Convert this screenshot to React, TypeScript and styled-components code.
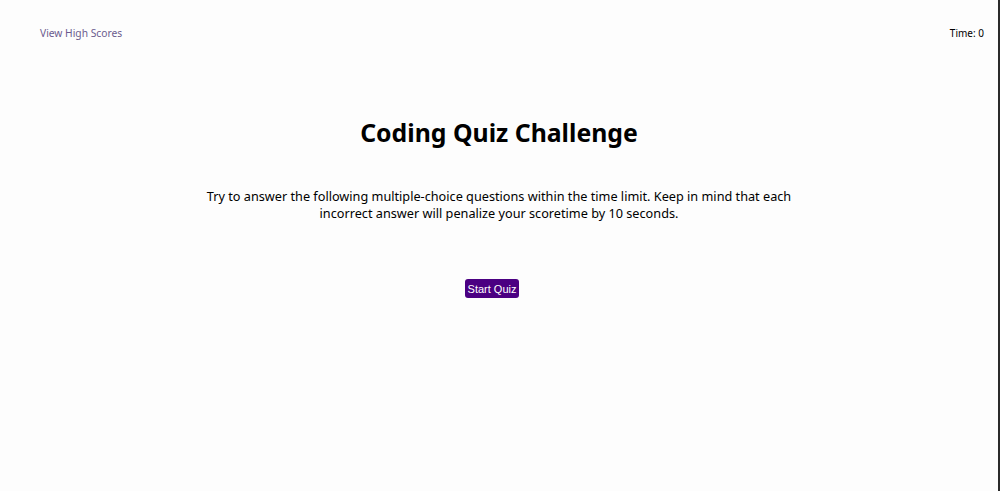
import React from "react";
import styled, { createGlobalStyle } from "styled-components";

const Global = createGlobalStyle`
  html, body { margin: 0; padding: 0; background: #fdfdfd; }
  body { font-family: "Noto Sans", "Open Sans", sans-serif; color: #000; }
`;

const Page = styled.div`
  height: 491px;
  box-sizing: border-box;
  border-right: 2px solid #2a2a2a;
  display: flex;
  flex-direction: column;
`;

const Header = styled.header`
  display: flex;
  justify-content: space-between;
  align-items: center;
  padding: 25px 14px 0 40px;
  height: 16px;
`;

const HighScores = styled.a`
  font-size: 10.25px;
  color: #6b5b8e;
  text-decoration: none;
`;

const Timer = styled.div`
  font-size: 10px;
  color: #000;
`;

const Main = styled.main`
  display: flex;
  flex-direction: column;
  align-items: center;
  text-align: center;
  padding-top: 74px;
`;

const Title = styled.h1`
  margin: 0;
  font-size: 24.8px;
  font-weight: 700;
  line-height: 34px;
`;

const Intro = styled.p`
  margin: 39px 0 0;
  width: 620px;
  font-size: 12.7px;
  line-height: 17px;
`;

const StartButton = styled.button`
  margin: 57px 14px 0 0;
  background: #4b0082;
  color: #fff;
  border: none;
  border-radius: 3px;
  padding: 0 3px;
  height: 19px;
  font-family: "Liberation Sans", Arial, sans-serif;
  font-size: 11px;
  cursor: pointer;
`;

export default function App() {
  return (
    <>
      <Global />
      <Page>
        <Header>
          <HighScores href="#">View High Scores</HighScores>
          <Timer>Time: 0</Timer>
        </Header>
        <Main>
          <Title>Coding Quiz Challenge</Title>
          <Intro>
            Try to answer the following multiple-choice questions within the time limit. Keep in mind that each
            incorrect answer will penalize your scoretime by 10 seconds.
          </Intro>
          <StartButton>Start Quiz</StartButton>
        </Main>
      </Page>
    </>
  );
}
